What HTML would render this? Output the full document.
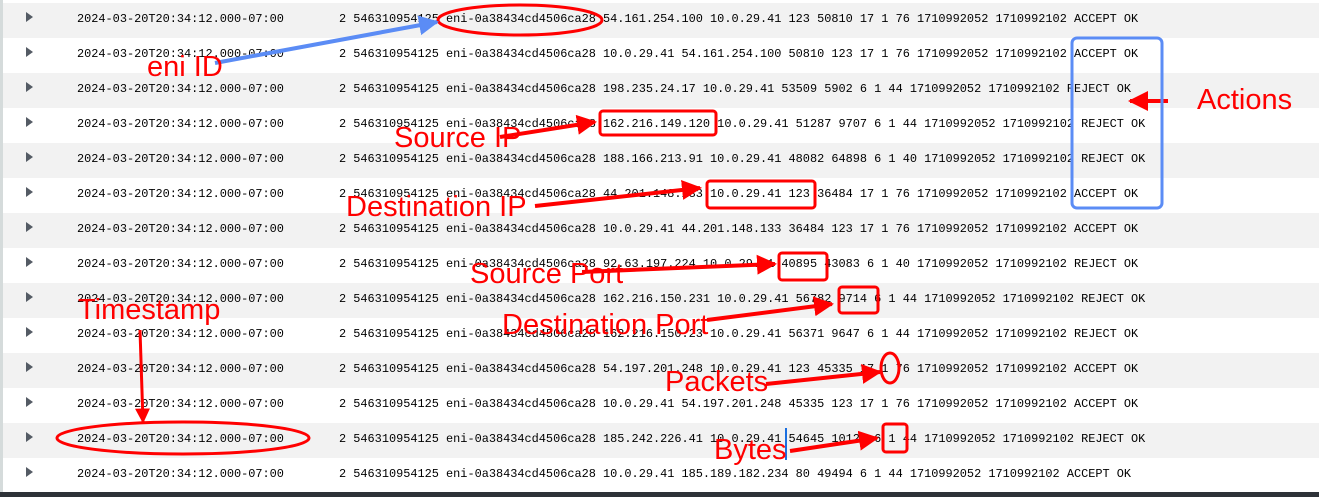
<!DOCTYPE html>
<html><head><style>
body{margin:0;width:1319px;height:497px;background:#fff;position:relative;overflow:hidden}
.r{position:absolute;left:3px;width:1316px;height:35px;font-family:"Liberation Mono",monospace;font-size:11.9px;color:#000}
.g{background:#f2f2f2}
.r span{position:absolute;top:9px;white-space:pre}
.t{left:74px}.m{left:336px}
.tri{position:absolute;left:23px;top:9px;width:0;height:0;border-left:7px solid #545b64;border-top:5px solid transparent;border-bottom:5px solid transparent}
svg{position:absolute;left:0;top:0}
</style></head><body>
<div style="position:absolute;left:0;top:0;width:3px;height:492px;background:#d5dbdb"></div>
<div class="r g" style="top:3px"><i class="tri"></i><span class="t">2024-03-20T20:34:12.000-07:00</span><span class="m">2 546310954125 eni-0a38434cd4506ca28 54.161.254.100 10.0.29.41 123 50810 17 1 76 1710992052 1710992102 ACCEPT OK</span></div>
<div class="r" style="top:38px"><i class="tri"></i><span class="t">2024-03-20T20:34:12.000-07:00</span><span class="m">2 546310954125 eni-0a38434cd4506ca28 10.0.29.41 54.161.254.100 50810 123 17 1 76 1710992052 1710992102 ACCEPT OK</span></div>
<div class="r g" style="top:73px"><i class="tri"></i><span class="t">2024-03-20T20:34:12.000-07:00</span><span class="m">2 546310954125 eni-0a38434cd4506ca28 198.235.24.17 10.0.29.41 53509 5902 6 1 44 1710992052 1710992102 REJECT OK</span></div>
<div class="r" style="top:108px"><i class="tri"></i><span class="t">2024-03-20T20:34:12.000-07:00</span><span class="m">2 546310954125 eni-0a38434cd4506ca28 162.216.149.120 10.0.29.41 51287 9707 6 1 44 1710992052 1710992102 REJECT OK</span></div>
<div class="r g" style="top:143px"><i class="tri"></i><span class="t">2024-03-20T20:34:12.000-07:00</span><span class="m">2 546310954125 eni-0a38434cd4506ca28 188.166.213.91 10.0.29.41 48082 64898 6 1 40 1710992052 1710992102 REJECT OK</span></div>
<div class="r" style="top:178px"><i class="tri"></i><span class="t">2024-03-20T20:34:12.000-07:00</span><span class="m">2 546310954125 eni-0a38434cd4506ca28 44.201.148.133 10.0.29.41 123 36484 17 1 76 1710992052 1710992102 ACCEPT OK</span></div>
<div class="r g" style="top:213px"><i class="tri"></i><span class="t">2024-03-20T20:34:12.000-07:00</span><span class="m">2 546310954125 eni-0a38434cd4506ca28 10.0.29.41 44.201.148.133 36484 123 17 1 76 1710992052 1710992102 ACCEPT OK</span></div>
<div class="r" style="top:248px"><i class="tri"></i><span class="t">2024-03-20T20:34:12.000-07:00</span><span class="m">2 546310954125 eni-0a38434cd4506ca28 92.63.197.224 10.0.29.41 40895 43083 6 1 40 1710992052 1710992102 REJECT OK</span></div>
<div class="r g" style="top:283px"><i class="tri"></i><span class="t">2024-03-20T20:34:12.000-07:00</span><span class="m">2 546310954125 eni-0a38434cd4506ca28 162.216.150.231 10.0.29.41 56782 9714 6 1 44 1710992052 1710992102 REJECT OK</span></div>
<div class="r" style="top:318px"><i class="tri"></i><span class="t">2024-03-20T20:34:12.000-07:00</span><span class="m">2 546310954125 eni-0a38434cd4506ca28 162.216.150.23 10.0.29.41 56371 9647 6 1 44 1710992052 1710992102 REJECT OK</span></div>
<div class="r g" style="top:353px"><i class="tri"></i><span class="t">2024-03-20T20:34:12.000-07:00</span><span class="m">2 546310954125 eni-0a38434cd4506ca28 54.197.201.248 10.0.29.41 123 45335 17 1 76 1710992052 1710992102 ACCEPT OK</span></div>
<div class="r" style="top:388px"><i class="tri"></i><span class="t">2024-03-20T20:34:12.000-07:00</span><span class="m">2 546310954125 eni-0a38434cd4506ca28 10.0.29.41 54.197.201.248 45335 123 17 1 76 1710992052 1710992102 ACCEPT OK</span></div>
<div class="r g" style="top:423px"><i class="tri"></i><span class="t">2024-03-20T20:34:12.000-07:00</span><span class="m">2 546310954125 eni-0a38434cd4506ca28 185.242.226.41 10.0.29.41 54645 10120 6 1 44 1710992052 1710992102 REJECT OK</span></div>
<div class="r" style="top:458px"><i class="tri"></i><span class="t">2024-03-20T20:34:12.000-07:00</span><span class="m">2 546310954125 eni-0a38434cd4506ca28 10.0.29.41 185.189.182.234 80 49494 6 1 44 1710992052 1710992102 ACCEPT OK</span></div>
<div style="position:absolute;left:0;top:492px;width:1319px;height:5px;background:#2e3238"></div>
<svg width="1319" height="497" font-family="Liberation Sans, sans-serif" font-size="29" fill="none">
<defs>
<marker id="ar" viewBox="0 0 10 10" refX="9" refY="5" markerWidth="5" markerHeight="5" orient="auto"><path d="M0 0L10 5L0 10z" fill="#f00"/></marker>
<marker id="ab" viewBox="0 0 10 10" refX="9" refY="5" markerWidth="5" markerHeight="5" orient="auto"><path d="M0 0L10 5L0 10z" fill="#5b8cf5"/></marker>
</defs>
<g stroke="#f00" stroke-width="3">
<ellipse cx="520" cy="20" rx="82" ry="15"/>
<rect x="600" y="111" width="116" height="24" rx="3"/>
<rect x="707" y="181" width="108" height="27" rx="3"/>
<rect x="779" y="253" width="48" height="27" rx="3"/>
<rect x="839" y="287" width="39" height="26" rx="3"/>
<ellipse cx="183" cy="438" rx="126" ry="16"/>
<ellipse cx="890" cy="368" rx="9" ry="15"/>
<rect x="883" y="424" width="24" height="28" rx="3"/>
<line x1="1168" y1="101" x2="1130" y2="101" marker-end="url(#ar)" stroke-width="4"/>
<line x1="500" y1="137" x2="595" y2="122" marker-end="url(#ar)" stroke-width="4"/>
<line x1="535" y1="206" x2="700" y2="188" marker-end="url(#ar)" stroke-width="4"/>
<line x1="582" y1="272" x2="775" y2="264" marker-end="url(#ar)" stroke-width="4"/>
<line x1="707" y1="320" x2="832" y2="304" marker-end="url(#ar)" stroke-width="4"/>
<line x1="140" y1="330" x2="143" y2="422" marker-end="url(#ar)" stroke-width="3"/>
<line x1="766" y1="384" x2="880" y2="372" marker-end="url(#ar)" stroke-width="4"/>
<line x1="790" y1="451" x2="877" y2="438" marker-end="url(#ar)" stroke-width="4"/>
</g>
<rect x="1072" y="38" width="90" height="170" rx="5" stroke="#5b8cf5" stroke-width="3"/>
<line x1="215" y1="63" x2="437" y2="22" stroke="#5b8cf5" stroke-width="4" marker-end="url(#ab)"/>
<line x1="786" y1="428" x2="786" y2="460" stroke="#1a6fe0" stroke-width="2"/>
<g fill="#f00" stroke="none">
<text x="147" y="76">eni ID</text>
<text x="1197" y="109">Actions</text>
<text x="394" y="147">Source IP</text>
<text x="346" y="216">Destination IP</text>
<text x="470" y="283">Source Port</text>
<text x="502" y="334">Destination Port</text>
<text x="78" y="319">Timestamp</text>
<text x="665" y="391">Packets</text>
<text x="714" y="459">Bytes</text>
</g>
</svg>
</body></html>
